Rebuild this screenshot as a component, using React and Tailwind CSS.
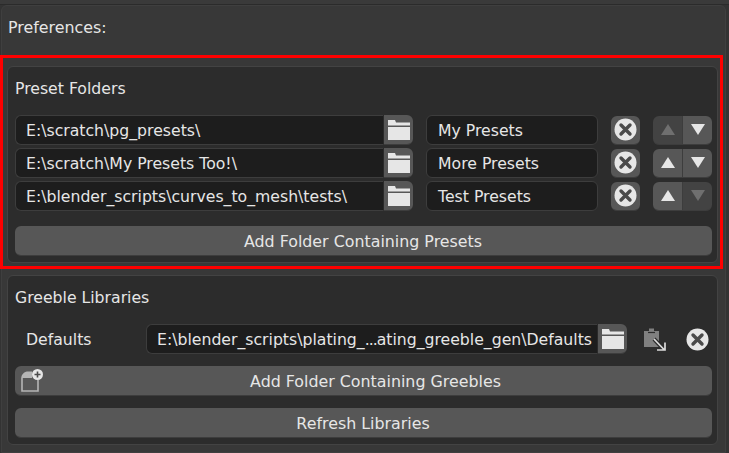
import React from 'react';

const FolderIcon = () => (
  <svg width="22" height="20" viewBox="0 0 22 20" fill="#e6e6e6">
    <path d="M0 0h7l1 2.5h14v3H0zM0 7h22v13H0z" />
  </svg>
);

const CloseIcon = () => (
  <svg width="23" height="23" viewBox="0 0 23 23">
    <circle cx="11.5" cy="11.5" r="11" fill="#e6e6e6" />
    <path d="M7 7l9 9M16 7l-9 9" stroke="#4a4a4a" strokeWidth="3.4" strokeLinecap="round" />
  </svg>
);

const Triangle = ({ down, dim }) => (
  <svg width="14" height="11" viewBox="0 0 14 11" fill={dim ? '#6f6f6f' : '#e6e6e6'}>
    <path d={down ? 'M0 0h14L7 11z' : 'M7 0l7 11H0z'} />
  </svg>
);

const PathField = ({ children, w }) => (
  <div className={`flex h-[30px] ${w}`}>
    <div className="flex-1 min-w-0 flex items-center pl-[10px] pt-px bg-[#1d1d1d] border border-[#3d3d3d] border-r-0 rounded-l-[6px] text-[#e6e6e6] whitespace-nowrap">
      <span>{children}</span>
    </div>
    <div className="w-[30px] flex items-center justify-center bg-[#575757] rounded-r-[6px] border-b border-[#3d3d3d] border-l border-l-[#2a2a2a]">
      <FolderIcon />
    </div>
  </div>
);

const PresetRow = ({ path, name, upDim, downDim }) => (
  <div className="flex items-center h-[30px]">
    <PathField w="w-[398px]">{path}</PathField>
    <div className="ml-[13px] w-[172px] h-[30px] flex items-center pl-[11px] pt-px bg-[#1d1d1d] border border-[#3d3d3d] rounded-[6px] text-[#e6e6e6]">
      {name}
    </div>
    <div className="ml-[13px] w-[29px] h-[29px] flex items-center justify-center bg-[#575757] rounded-[6px] border-b border-[#3d3d3d]">
      <CloseIcon />
    </div>
    <div className="ml-[13px] flex h-[29px] w-[59px]">
      <div className={`flex-1 flex items-center justify-center rounded-l-[6px] border-b border-[#3d3d3d] ${upDim ? 'bg-[#434343]' : 'bg-[#575757]'}`}>
        <Triangle dim={upDim} />
      </div>
      <div className={`flex-1 flex items-center justify-center rounded-r-[6px] border-b border-l border-[#3d3d3d] ${downDim ? 'bg-[#434343]' : 'bg-[#575757]'}`}>
        <Triangle down dim={downDim} />
      </div>
    </div>
  </div>
);

const WideButton = ({ label, icon }) => (
  <div className={`relative h-[30px] flex items-center justify-center pt-[2px] bg-[#575757] rounded-[6px] border-b border-[#3d3d3d] text-[15.85px] text-[#e6e6e6] ${icon ? 'pl-[24px]' : 'pr-px'}`}>
    {icon && <div className="absolute left-[6px] top-[3px] flex">{icon}</div>}
    {label}
  </div>
);

const NewFolderIcon = () => (
  <svg width="23" height="23" viewBox="0 0 23 23" fill="none">
    <path d="M1 9v13h16V11" stroke="#b5b5b5" strokeWidth="1.6" />
    <path d="M0.2 9C0.5 5.5 3 3 6 2.500h5v6.500z" fill="#b5b5b5" />
    <circle cx="16.500" cy="5.500" r="5.500" fill="#e6e6e6" />
    <path d="M16.500 2.500v6M13.500 5.500h6" stroke="#4a4a4a" strokeWidth="1.6" />
  </svg>
);

const ClipboardIcon = () => (
  <svg width="22" height="23" viewBox="0 0 22 23" fill="none">
    <path d="M0 3h5V0.500h5V3h5v16H0z" fill="#808080" />
    <path d="M4 4.500h7" stroke="#2c2c2c" strokeWidth="1.2" />
    <path d="M10 11l10 10.500M21 14v8h-9" stroke="#2c2c2c" strokeWidth="4" />
    <path d="M10 11l10 10.500M21 14.500v7.500h-8" stroke="#dcdcdc" strokeWidth="1.7" />
  </svg>
);

export default function App() {
  return (
    <div
      className="w-[729px] h-[453px] overflow-hidden bg-[#333333] text-[15.7px] leading-[20px] text-[#e6e6e6]"
      style={{ fontFamily: '"DejaVu Sans", sans-serif' }}
    >
      <div className="h-[5px] bg-[#3a3a3a] border-b border-[#2b2b2b]" />
      <div className="ml-px mr-[3px] h-[448px] bg-[#383838] border border-[#3f3f3f] rounded-t-[6px]">
        <div className="pl-[6px] pt-[12px] h-[49px] text-[15.85px]">Preferences:</div>
        <div className="ml-[-2px] w-[723px] h-[214px] border-[3px] border-[#ff0000] pl-[4px] pr-[2px] pt-[8px]">
          <div className="h-[197px] bg-[#2c2c2c] border border-[#434343] rounded-[6px] pl-[7px] pr-[5px] pt-[12px]">
            <div className="mb-[16px]">Preset Folders</div>
            <div className="flex flex-col gap-[3px]">
              <PresetRow path="E:\scratch\pg_presets\" name="My Presets" upDim />
              <PresetRow path="E:\scratch\My Presets Too!\" name="More Presets" />
              <PresetRow path="E:\blender_scripts\curves_to_mesh\tests\" name="Test Presets" downDim />
            </div>
            <div className="mt-[15px]">
              <WideButton label="Add Folder Containing Presets" />
            </div>
          </div>
        </div>
        <div className="ml-[5px] mt-[6px] w-[711px] h-[170px] bg-[#2c2c2c] border border-[#434343] rounded-[6px] pl-[7px] pr-[5px] pt-[12px]">
          <div className="mb-[16px]">Greeble Libraries</div>
          <div className="flex items-center h-[30px]">
            <div className="w-[131px] pl-[11px] pt-px">Defaults</div>
            <PathField w="w-[481px]">
              E:\blender_scripts\plating_<span className="tracking-[-1px]">...</span>ating_greeble_gen\Defaults
            </PathField>
            <div className="ml-[17px] w-[22px] flex"><ClipboardIcon /></div>
            <div className="ml-[20px] flex"><CloseIcon /></div>
          </div>
          <div className="mt-[12px]">
            <WideButton label="Add Folder Containing Greebles" icon={<NewFolderIcon />} />
          </div>
          <div className="mt-[12px]">
            <WideButton label="Refresh Libraries" />
          </div>
        </div>
      </div>
    </div>
  );
}
